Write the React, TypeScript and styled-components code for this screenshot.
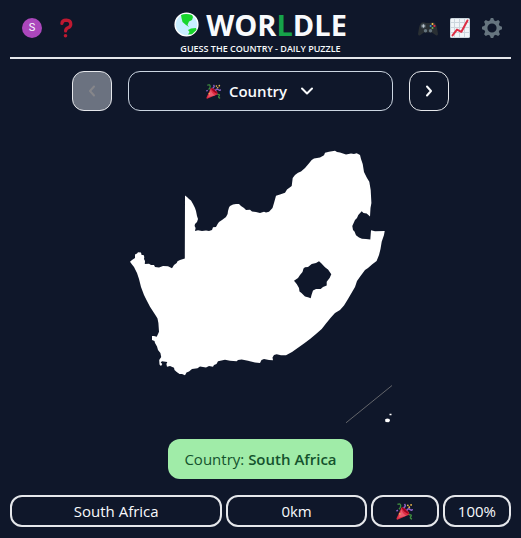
import React from "react";
import styled, { createGlobalStyle } from "styled-components";

const GlobalStyle = createGlobalStyle`
  *, *::before, *::after { box-sizing: border-box; }
  body {
    margin: 0;
    background: #0f172a;
    color: #f8fafc;
    font-family: "Open Sans", "Noto Sans", sans-serif;
    font-size: 15px;
    line-height: 24px;
  }
  button { font: inherit; color: inherit; background: none; margin: 0; padding: 0; cursor: pointer; }
  svg { display: block; }
`;

const Page = styled.div`
  display: flex;
  flex-direction: column;
  padding: 0 10px 11px;
`;

const Header = styled.header`
  display: grid;
  grid-template-columns: 1fr auto 1fr;
  align-items: center;
  height: 59px;
  border-bottom: 2px solid #e5e7eb;
`;

const Actions = styled.div<{ $end?: boolean }>`
  display: flex;
  gap: ${(p) => (p.$end ? "12px" : "14px")};
  padding: ${(p) => (p.$end ? "0 9px 1px 0" : "0 0 1px 12px")};
  justify-content: ${(p) => (p.$end ? "flex-end" : "flex-start")};
`;

const IconButton = styled.button`
  width: 20px;
  height: 20px;
  border: 0;
`;

const Avatar = styled(IconButton)`
  border-radius: 50%;
  background: #ab47bc;
  font-family: Roboto, sans-serif;
  font-size: 11px;
  line-height: 20px;
`;

const Brand = styled.div`
  display: flex;
  flex-direction: column;
  align-items: center;
  padding-top: 2px;
`;

const Title = styled.h1`
  display: flex;
  align-items: center;
  gap: 7px;
  margin: 0;
  font-size: 29px;
  line-height: 38px;
  font-weight: 700;
`;

const Accent = styled.span`
  color: #16a34a;
`;

const Tagline = styled.p`
  margin: 0;
  font-size: 9px;
  line-height: 10px;
  font-weight: 600;
  text-transform: uppercase;
`;

const Picker = styled.nav`
  display: flex;
  gap: 16px;
  margin-top: 12px;
  padding: 0 62px;
`;

const StepButton = styled.button`
  display: flex;
  align-items: center;
  justify-content: center;
  width: 40px;
  height: 40px;
  border: 1px solid #e5e7eb;
  border-radius: 12px;
  &:disabled {
    background: #6b7280;
    color: #86868a;
    cursor: default;
  }
`;

const RoundButton = styled.button`
  display: flex;
  flex: 1;
  align-items: center;
  justify-content: center;
  gap: 8px;
  height: 40px;
  border: 1px solid #cbd5e1;
  border-radius: 12px;
  font-weight: 600;
  svg:last-child { margin-left: 4px; }
`;

const MapArea = styled.main`
  display: flex;
  flex-direction: column;
  align-items: center;
  gap: 8px;
  padding-top: 8px;
`;

const Answer = styled.div`
  padding: 8px 16px;
  border-radius: 12px;
  background: #a0eca8;
  color: #14532d;
  strong { font-weight: 600; }
`;

const Guess = styled.div`
  display: grid;
  grid-template-columns: repeat(7, 1fr);
  gap: 4px;
  margin-top: 16px;
`;

const Cell = styled.div<{ $span?: number }>`
  grid-column: span ${(p) => p.$span ?? 1};
  display: flex;
  align-items: center;
  justify-content: center;
  height: 32px;
  border: 2px solid #e5e7eb;
  border-radius: 12px;
`;

const Chevron = ({ d }: { d: string }) => (
  <svg width="16" height="16" viewBox="0 0 16 16" fill="none" stroke="currentColor" strokeWidth="2" aria-hidden="true">
    <path d={d} strokeLinecap="round" strokeLinejoin="round" />
  </svg>
);

const Party = ({ size }: { size: number }) => (
  <svg width={size} height={size} viewBox="0 0 36 36" role="img" aria-label="Party">
    <path fill="#dd2e44" d="M11.6 9.6 L1 33 Q1 36 4 35 L28.5 24.5 Q29 20 22 14 Q15 8 11.6 9.6Z" />
    <path fill="#ea596e" d="M11.6 13 L5 31 L22 27 Q13 22 11.6 13Z" />
    <path fill="#a0041e" d="M12 9.6 Q14 18 28 24 Q25 16 18 11.5 Q14 9 12 9.6Z" />
    <path fill="none" stroke="#3e8a3e" strokeWidth="3" d="M3 3 Q10 0 10 6 Q10 11 6 13 M27 25 Q35 24 31 29 Q29 33 34 34" />
    <path fill="none" stroke="#9266cc" strokeWidth="3.2" d="M16 10 Q22 7 18 2 M23 16 Q25 10 30 14 Q34 17 35 13 M1 17 L4 15" />
    <g fill="#e9b44c">
      <circle cx="25" cy="5" r="2" />
      <circle cx="32" cy="4" r="2" />
      <circle cx="28" cy="9" r="2" />
      <circle cx="8" cy="23" r="2" />
    </g>
  </svg>
);

const Globe = () => (
  <svg width="25" height="25" viewBox="0 0 25 25" aria-hidden="true">
    <circle cx="12.5" cy="12.5" r="11.4" fill="#c9eeff" stroke="#fff" strokeWidth="1.4" />
    <path fill="#18d62b" d="M7 3 Q12 1 18 3 L19 5 L18 8 L15 9.5 L13.5 13 L15 15 L12 13 L8.5 10 L7.5 6Z M14 18 L17 16.5 L22 16 L22.5 18 L18 22.2 L14 22.5 L15.5 20Z" />
  </svg>
);

const Question = () => (
  <svg width="20" height="20" viewBox="0 0 20 20" fill="none" aria-hidden="true">
    <path d="M5.9 5.5 Q6 2.3 10.4 2.2 Q14.8 2.4 14.8 6.2 Q14.8 8.6 12 9.8 Q9.7 10.8 9.6 13" stroke="#be1931" strokeWidth="3.2" strokeLinecap="round" />
    <circle cx="9.5" cy="17.8" r="1.8" fill="#be1931" />
  </svg>
);

const Gamepad = () => (
  <svg width="20" height="20" viewBox="0 0 20 20" aria-hidden="true">
    <path fill="#292f33" d="M4 4.5 Q6 3.7 8 5 H12 Q14 3.7 16 4.5 Q18 5 19 10 L20 16 Q19.5 18.5 17.5 17 L14 14.5 H6 L2.5 17 Q.5 18.5 0 16 L1 10 Q2 5 4 4.5Z" />
    <circle cx="5.4" cy="8" r="2.5" fill="#45515a" />
    <path stroke="#c5ced4" strokeWidth="1" d="M3.7 8 H7.1 M5.4 6.3 V9.7" />
    <g fill="#66757f">
      <circle cx="7.5" cy="12.8" r="1.7" />
      <circle cx="12.5" cy="12.8" r="1.7" />
    </g>
    <circle cx="14.5" cy="5.9" r="1" fill="#ffcc4d" />
    <circle cx="16.4" cy="7.9" r="1.1" fill="#dd2e44" />
    <circle cx="12.6" cy="7.9" r="1" fill="#3b94d9" />
    <circle cx="14.5" cy="9.9" r="1" fill="#77b255" />
  </svg>
);

const Trend = () => (
  <svg width="20" height="20" viewBox="0 0 20 20" aria-hidden="true">
    <rect width="20" height="20" rx="1.6" fill="#ccd6dd" />
    <path fill="#f1f5f8" d="M1 1h3v3H1zM5 1h4v3H5zM10 1h4v3h-4zM15 1h4v3h-4zM1 5h3v4H1zM5 5h4v4H5zM10 5h4v4h-4zM15 5h4v4h-4zM1 10h3v4H1zM5 10h4v4H5zM10 10h4v4h-4zM15 10h4v4h-4zM1 15h3v4H1zM5 15h4v4H5zM10 15h4v4h-4zM15 15h4v4h-4z" />
    <path d="M2.5 17.4 L7 11.6 L11.4 13.8 L17.5 2.5" fill="none" stroke="#dd2e44" strokeWidth="2" strokeLinecap="round" strokeLinejoin="round" />
  </svg>
);

const teeth = [0, 45, 90, 135, 180, 225, 270, 315];

const Gear = () => (
  <svg width="20" height="20" viewBox="0 0 20 20" aria-hidden="true">
    <circle cx="10" cy="10" r="6.2" fill="none" stroke="#66757f" strokeWidth="3.2" />
    {teeth.map((a) => (
      <path key={a} d="M7.6 3.2 L8.8 0 H11.2 L12.4 3.2Z" fill="#66757f" transform={`rotate(${a} 10 10)`} />
    ))}
  </svg>
);

const mainland =
  "M185 195.5 L187 197 L189 199 L191 200.5 L193 204 L195 208 L196 211 L197 216 L198 219 L197 222 L195 224 L194.6 226 L195.6 228 L195 231 L198 230.3 L202 231 L206 230.6 L209 231 L212 230 L213 227.3 L216 227 L217.6 224 L219 222 L222 220 L226 217 L227.6 214 L228 211 L229 207.5 L230 206 L233 204.5 L236 204 L239 204 L241 206 L244 208 L246 210 L250 209.7 L252 211.5 L256 212 L260 213 L264 211.7 L266 212.6 L269 211.7 L272.5 208 L274 203 L276 195.7 L280 194.5 L285 192.7 L287 189.6 L291.7 186 L292.7 178 L295 175 L298 172.7 L301 171.5 L305 168 L308 164.5 L311.7 160 L314 158.5 L320 157.5 L324 155.3 L325 152.7 L329 151.8 L335 150.7 L337 152 L340 152.4 L346 154.4 L351 153.5 L354 154 L356.7 153.3 L360 155 L361 159 L362.7 164 L364 172 L367 178 L369.3 181.7 L370.7 190 L371.4 203 L370.5 208 L370 216.5 L366.7 213.5 L363.5 213 L361.7 211.3 L358.3 215 L357 218 L355 220 L352.3 226 L353 230 L354.5 231.5 L356 235.3 L359 237.5 L362 238.8 L366 239 L370.3 239.4 L371 230.3 L375 231.3 L384.7 231 L384 235 L381.7 241.7 L380.5 249 L379 255 L376.6 261 L372 264.5 L368 268 L365 270 L360 276.7 L357 281 L355 287 L348 299 L344 305.5 L340 310 L335 313 L330.7 317.7 L326 323.5 L321.7 329 L316 334 L310 339 L304 343.5 L298 347.7 L292 352 L286 355.3 L281 355.3 L276.7 354.3 L274 355 L272.5 357.5 L273 360.3 L269 360 L264 359 L261.5 360 L260 363 L255 362.6 L248 360.7 L241.7 359.5 L238 360 L236.7 361.3 L230 360.7 L225 359.7 L218 361.3 L216.5 364 L214 365 L213 366.7 L209 366 L206 367.4 L200 366.5 L197.5 368.3 L192 369 L189 371.5 L186.5 372.5 L185 375.3 L182 374 L179.5 374 L176.7 372 L174.5 370 L174 367.7 L170 366 L167 366.7 L166.4 364 L167.3 362 L162 361.3 L160.7 362.5 L162.3 364 L161 366 L159.5 364.5 L159.2 360 L161.2 357 L160.4 353 L158 350 L157 346.5 L155 343 L154.5 341 L152 340 L152 336 L154 336 L156.7 336.7 L158 334 L159 331.7 L158.4 323 L157.5 318.5 L156 316 L150 306.7 L147 301 L144 295 L141 287 L139 279 L137 273 L134 267 L132 264.5 L130 261.7 L132 260 L135 258 L135 254.5 L137 253.5 L138 252.2 L141 252.5 L141.6 255 L143.6 255 L144.3 257 L144 259 L145 261 L144.8 264 L149 263.8 L151 265 L154 265 L155 267 L159 267.5 L163 266 L168 266.3 L172 268.2 L174 265 L176.7 263 L177.5 261.3 L180 260 L184.8 258.5Z";

const lesotho =
  "M294 280.7 L298 278 L300 275 L302.5 272 L303.5 268.5 L305 267.3 L308 267 L311.7 264 L316 263 L319 261.3 L321 263 L325 267.3 L328 269.5 L331.3 274.3 L329.6 278 L326.7 281.7 L326.7 285.5 L323 287 L320.7 289 L316 289 L313 290.5 L311.5 295 L310.7 298.3 L308 297.3 L305 296.5 L301.5 293 L299.5 291.5 L299 288 L296.7 284Z";

const CountryShape = () => (
  <svg width="281" height="312" viewBox="120 119 281 312" role="img" aria-label="Country outline">
    <path fill="#fff" fillRule="evenodd" d={`${mainland} ${lesotho}`} />
    <path stroke="#63656a" strokeWidth="1" d="M346 422.8 L392 385.5" />
    <path fill="#fff" d="M385 419.5 L387 418.5 L389.5 419 L390 421 L388.5 422.3 L385.5 422Z M389.5 413.7 h2 v1.5 h-2Z" />
  </svg>
);

export default function App() {
  return (
    <Page>
      <GlobalStyle />
      <Header>
        <Actions>
          <Avatar aria-label="Account">S</Avatar>
          <IconButton aria-label="Help"><Question /></IconButton>
        </Actions>
        <Brand>
          <Title>
            <Globe />
            <span>WOR<Accent>L</Accent>DLE</span>
          </Title>
          <Tagline>Guess the country - Daily puzzle</Tagline>
        </Brand>
        <Actions $end>
          <IconButton aria-label="Other games"><Gamepad /></IconButton>
          <IconButton aria-label="Statistics"><Trend /></IconButton>
          <IconButton aria-label="Settings"><Gear /></IconButton>
        </Actions>
      </Header>
      <Picker aria-label="Rounds">
        <StepButton disabled aria-label="Previous round"><Chevron d="M10 3.5 L6 8 L10 12.5" /></StepButton>
        <RoundButton aria-haspopup="listbox">
          <Party size={15} />
          Country
          <Chevron d="M3 5.5 L8 10.5 L13 5.5" />
        </RoundButton>
        <StepButton aria-label="Next round"><Chevron d="M6 3.5 L10 8 L6 12.5" /></StepButton>
      </Picker>
      <MapArea>
        <CountryShape />
        <Answer>Country: <strong>South Africa</strong></Answer>
      </MapArea>
      <Guess>
        <Cell $span={3}>South Africa</Cell>
        <Cell $span={2}>0km</Cell>
        <Cell><Party size={17} /></Cell>
        <Cell>100%</Cell>
      </Guess>
    </Page>
  );
}
